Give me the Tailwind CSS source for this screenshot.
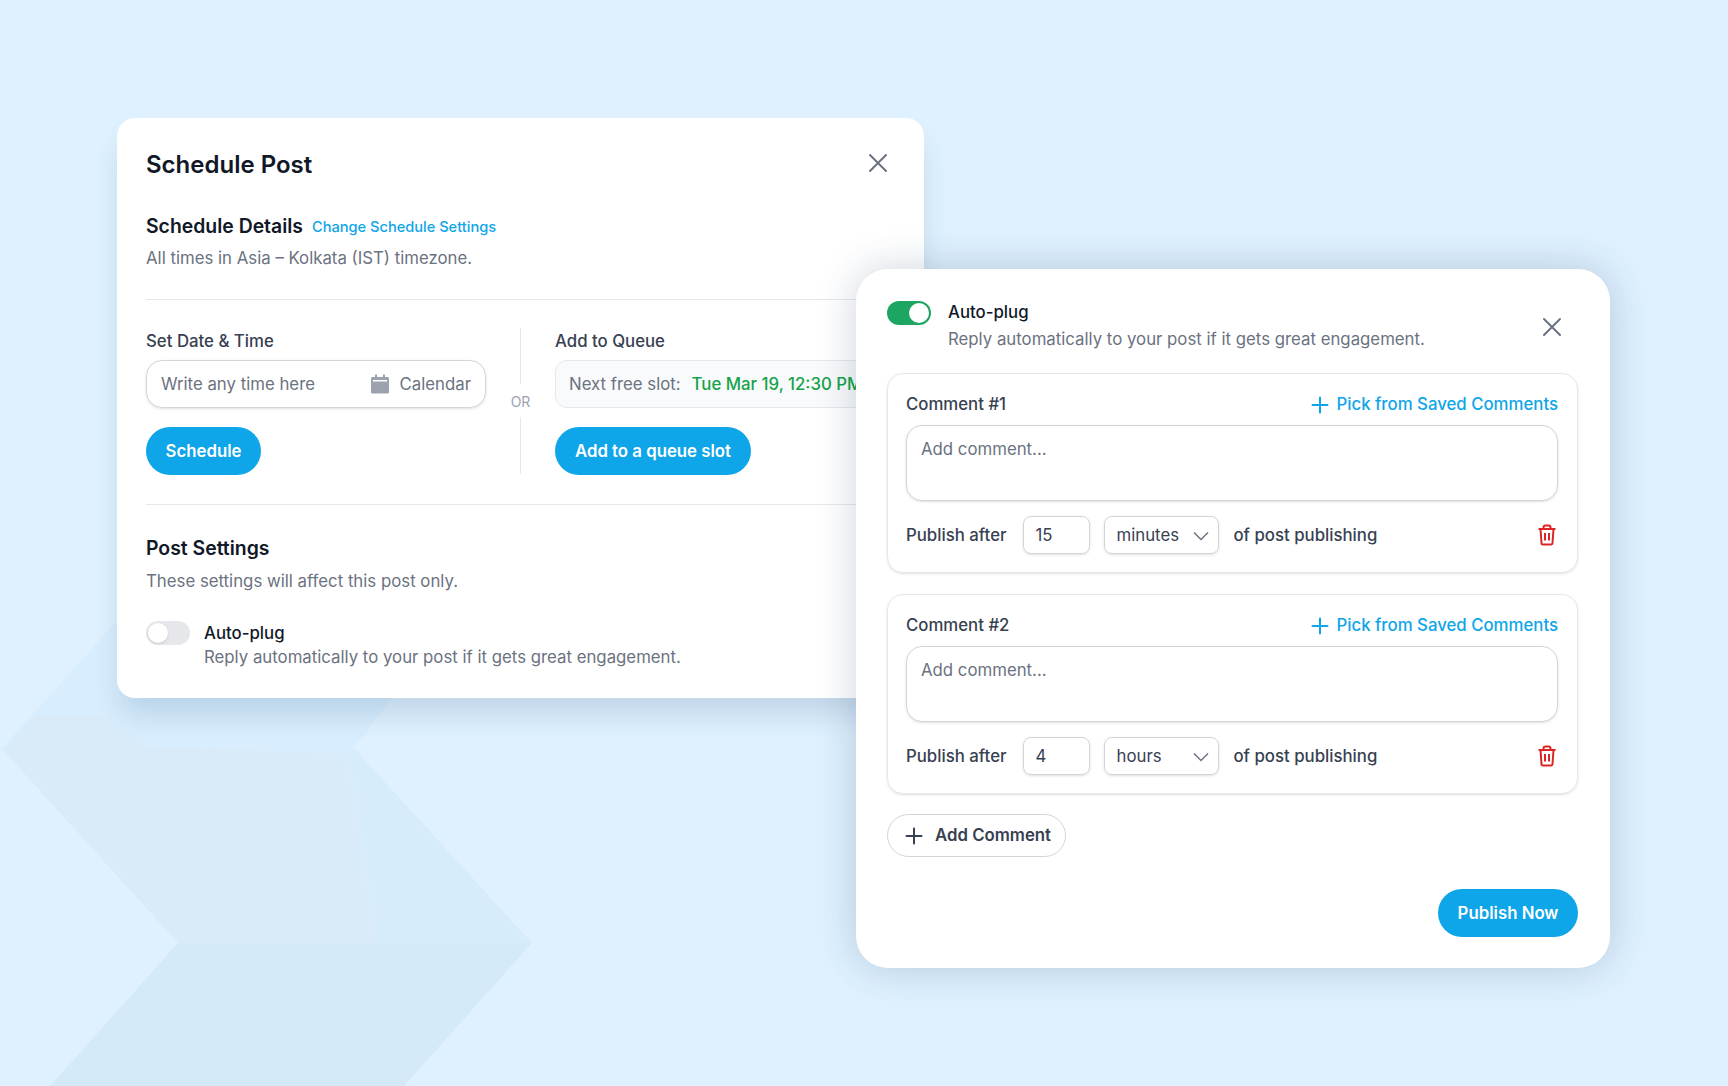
<!DOCTYPE html>
<html lang="en">
<head>
  <meta charset="UTF-8" />
  <title>Schedule Post</title>
  <script src="https://cdn.jsdelivr.net/npm/@tailwindcss/browser@4"></script>
</head>
<body class="bg-[#DFF1FE] font-['Inter',sans-serif] text-[16.8px] text-[#374151]">
<div class="relative w-[1728px] h-[1086px] overflow-hidden">

  <!-- background chevrons -->
  <svg class="absolute left-0 top-0" width="1728" height="1086" viewBox="0 0 1728 1086">
    <polygon points="0,750 115,623 450,623 354,748 348,753 149,747" fill="#D8EEFE"/>
    <polygon points="3,750 35,715 100,715 149,747 348,753 377,943 178,943" fill="#D9EBF8"/>
    <polygon points="354,748 532,943 377,943 348,753" fill="#D6ECFB"/>
    <polygon points="178,943 532,943 404,1086 50,1086" fill="#D4EAF8"/>
  </svg>

  <!-- schedule card -->
  <section class="absolute left-[117px] top-[118px] w-[807px] h-[580px] bg-white rounded-[18px] shadow-[0_20px_28px_-4px_rgba(30,70,110,0.16)] px-[29px] pt-[31px]">
    <div class="flex items-center justify-between h-8">
      <h1 class="text-2xl leading-8 font-semibold text-[#111827]">Schedule Post</h1>
      <svg class="mr-[7px] mb-[4px]" width="20" height="20" viewBox="0 0 20 20" fill="none" stroke="#6B7280" stroke-width="2" stroke-linecap="round"><path d="M2 2l16 16M18 2L2 18"/></svg>
    </div>
    <div class="mt-[31px] flex items-center gap-[9px] h-7">
      <h2 class="text-[19.4px] leading-7 font-semibold text-[#111827]">Schedule Details</h2>
      <a class="text-[14.6px] leading-5 font-medium text-[#0EA5E9] mt-[1px]">Change Schedule Settings</a>
    </div>
    <p class="mt-[6px] h-6 leading-6 text-[#6B7280]">All times in Asia – Kolkata (IST) timezone.</p>
    <div class="mt-[29px] h-px bg-[#E5E7EB]"></div>

    <div class="mt-[28px] flex">
      <div class="w-[340px] shrink-0">
        <div class="h-6 pt-[1px] leading-6 font-medium">Set Date &amp; Time</div>
        <div class="mt-[8px] h-12 rounded-2xl border border-[#D1D5DB] shadow-sm flex items-center pl-[14px] pr-[14px] pt-[2px]">
          <span class="text-[#6B7280] flex-1">Write any time here</span>
          <svg class="mb-[2px]" width="20" height="20" viewBox="0 0 20 20" fill="#9CA3AF"><path d="M5 0.5h2V3h6V0.5h2V3h2.5A1.5 1.5 0 0 1 19 4.500V18a1.500 1.500 0 0 1-1.500 1.500h-15A1.500 1.500 0 0 1 1 18V4.500A1.500 1.500 0 0 1 2.500 3H5z"/><rect x="3" y="6" width="14" height="1.500" fill="#fff"/></svg>
          <span class="ml-[10px] text-[#6B7280]">Calendar</span>
        </div>
        <button class="mt-[19px] h-12 w-[115px] pt-[2px] rounded-full bg-[#0EA5E9] text-white font-semibold">Schedule</button>
      </div>
      <div class="w-[69px] shrink-0 flex flex-col items-center">
        <div class="w-px h-[56px] bg-[#E5E7EB]"></div>
        <div class="h-[33px] flex items-center justify-center text-sm text-[#9CA3AF] pt-[3px]">OR</div>
        <div class="w-px h-[57px] bg-[#E5E7EB]"></div>
      </div>
      <div class="flex-1 min-w-0">
        <div class="h-6 pt-[1px] leading-6 font-medium">Add to Queue</div>
        <div class="mt-[8px] h-12 rounded-xl border border-[#E5E7EB] bg-[#F9FAFB] flex items-center pl-[13px] pt-[2px] whitespace-nowrap">
          <span class="text-[#6B7280]">Next free slot:</span>
          <span class="ml-[11px] font-medium text-[#16A34A]">Tue Mar 19, 12:30 PM</span>
        </div>
        <button class="mt-[19px] h-12 w-[196px] pt-[2px] rounded-full bg-[#0EA5E9] text-white font-semibold">Add to a queue slot</button>
      </div>
    </div>

    <div class="mt-[29px] h-px bg-[#E5E7EB]"></div>
    <h2 class="mt-[29px] text-[19.4px] leading-7 font-semibold text-[#111827]">Post Settings</h2>
    <p class="mt-[6px] h-6 pt-[1px] leading-6 text-[#6B7280]">These settings will affect this post only.</p>
    <div class="mt-[28px] flex gap-[14px]">
      <div class="mt-[1px] w-11 h-6 rounded-full bg-[#E5E7EB] relative shrink-0">
        <span class="absolute left-[2px] top-[2px] w-5 h-5 rounded-full bg-white shadow-sm"></span>
      </div>
      <div>
        <div class="h-6 pt-[1px] leading-6 font-medium text-[#111827]">Auto-plug</div>
        <div class="mt-[1px] leading-6 text-[#6B7280]">Reply automatically to your post if it gets great engagement.</div>
      </div>
    </div>
  </section>

  <!-- auto-plug card -->
  <section class="absolute left-[856px] top-[269px] w-[754px] h-[699px] bg-white rounded-[32px] shadow-[0_0_40px_rgba(30,60,100,0.22)] pl-[31px] pr-[32px] pt-[31px]">
    <div class="flex">
      <div class="mt-[1px] w-11 h-6 rounded-full bg-[#1DA661] relative shrink-0">
        <span class="absolute right-[2px] top-[2px] w-5 h-5 rounded-full bg-white"></span>
      </div>
      <div class="ml-[17px] flex-1">
        <div class="h-6 leading-6 font-medium text-[#111827]">Auto-plug</div>
        <div class="mt-[2px] h-6 pt-[1px] leading-6 text-[#6B7280]">Reply automatically to your post if it gets great engagement.</div>
      </div>
      <svg class="mt-[17px] mr-[16px]" width="20" height="20" viewBox="0 0 20 20" fill="none" stroke="#6B7280" stroke-width="2" stroke-linecap="round"><path d="M2 2l16 16M18 2L2 18"/></svg>
    </div>

    <div class="mt-[23px] h-[200px] rounded-2xl border border-[#E5E7EB] shadow-sm pl-[18px] pr-[19px] pt-[17px]">
      <div class="flex items-center justify-between h-6 pt-[4px]">
        <span class="font-medium">Comment #1</span>
        <a class="flex items-center gap-[7px] font-medium text-[#0EA5E9]">
          <svg width="18" height="18" viewBox="0 0 18 18" fill="none" stroke="#0EA5E9" stroke-width="2" stroke-linecap="round"><path d="M9 1.500v15M1.500 9h15"/></svg>
          Pick from Saved Comments
        </a>
      </div>
      <textarea placeholder="Add comment..." class="mt-[10px] block w-full h-[76px] rounded-2xl border border-[#D1D5DB] shadow-sm px-[14px] py-[11px] leading-6 resize-none placeholder:text-[#6B7280]"></textarea>
      <div class="mt-[15px] flex items-center h-[38px]">
        <span class="mt-[2px] font-medium">Publish after</span>
        <div class="ml-[17px] w-[67px] h-[38px] rounded-lg border border-[#D1D5DB] shadow-sm flex items-center pl-[11px] pt-[2px]">15</div>
        <div class="ml-[14px] w-[115px] h-[38px] rounded-lg border border-[#D1D5DB] shadow-sm flex items-center justify-between pl-[11px] pr-[9px] pt-[2px]">
          minutes
          <svg width="16" height="10" viewBox="0 0 16 10" fill="none" stroke="#6B7280" stroke-width="1.500"><path d="M1 1.500l7 7 7-7"/></svg>
        </div>
        <span class="mt-[2px] ml-[14px] flex-1 font-medium">of post publishing</span>
        <svg class="mr-[1px]" width="20" height="22" viewBox="0 0 20 22" fill="none" stroke="#DC2626" stroke-width="2"><path d="M1.500 5h17M6.500 5V3.500a2 2 0 0 1 2-2h3a2 2 0 0 1 2 2V5M3.500 5l1 14a1.500 1.500 0 0 0 1.500 1.500h8a1.500 1.500 0 0 0 1.500-1.500l1-14M8 9v7.500M12 9v7.500"/></svg>
      </div>
    </div>

    <div class="mt-[21px] h-[200px] rounded-2xl border border-[#E5E7EB] shadow-sm pl-[18px] pr-[19px] pt-[17px]">
      <div class="flex items-center justify-between h-6 pt-[4px]">
        <span class="font-medium">Comment #2</span>
        <a class="flex items-center gap-[7px] font-medium text-[#0EA5E9]">
          <svg width="18" height="18" viewBox="0 0 18 18" fill="none" stroke="#0EA5E9" stroke-width="2" stroke-linecap="round"><path d="M9 1.500v15M1.500 9h15"/></svg>
          Pick from Saved Comments
        </a>
      </div>
      <textarea placeholder="Add comment..." class="mt-[10px] block w-full h-[76px] rounded-2xl border border-[#D1D5DB] shadow-sm px-[14px] py-[11px] leading-6 resize-none placeholder:text-[#6B7280]"></textarea>
      <div class="mt-[15px] flex items-center h-[38px]">
        <span class="mt-[2px] font-medium">Publish after</span>
        <div class="ml-[17px] w-[67px] h-[38px] rounded-lg border border-[#D1D5DB] shadow-sm flex items-center pl-[11px] pt-[2px]">4</div>
        <div class="ml-[14px] w-[115px] h-[38px] rounded-lg border border-[#D1D5DB] shadow-sm flex items-center justify-between pl-[11px] pr-[9px] pt-[2px]">
          hours
          <svg width="16" height="10" viewBox="0 0 16 10" fill="none" stroke="#6B7280" stroke-width="1.500"><path d="M1 1.500l7 7 7-7"/></svg>
        </div>
        <span class="mt-[2px] ml-[14px] flex-1 font-medium">of post publishing</span>
        <svg class="mr-[1px]" width="20" height="22" viewBox="0 0 20 22" fill="none" stroke="#DC2626" stroke-width="2"><path d="M1.500 5h17M6.500 5V3.500a2 2 0 0 1 2-2h3a2 2 0 0 1 2 2V5M3.500 5l1 14a1.500 1.500 0 0 0 1.500 1.500h8a1.500 1.500 0 0 0 1.500-1.500l1-14M8 9v7.500M12 9v7.500"/></svg>
      </div>
    </div>

    <button class="mt-[20px] h-[43px] w-[179px] rounded-full border border-[#D1D5DB] flex items-center pl-[17px] font-semibold">
      <svg width="18" height="18" viewBox="0 0 18 18" fill="none" stroke="#374151" stroke-width="2" stroke-linecap="round"><path d="M9 1.500v15M1.500 9h15"/></svg>
      <span class="ml-[12px]">Add Comment</span>
    </button>
    <div class="mt-[32px] flex justify-end">
      <button class="h-12 w-[140px] pt-[2px] rounded-full bg-[#0EA5E9] text-white font-semibold">Publish Now</button>
    </div>
  </section>
</div>
</body>
</html>
